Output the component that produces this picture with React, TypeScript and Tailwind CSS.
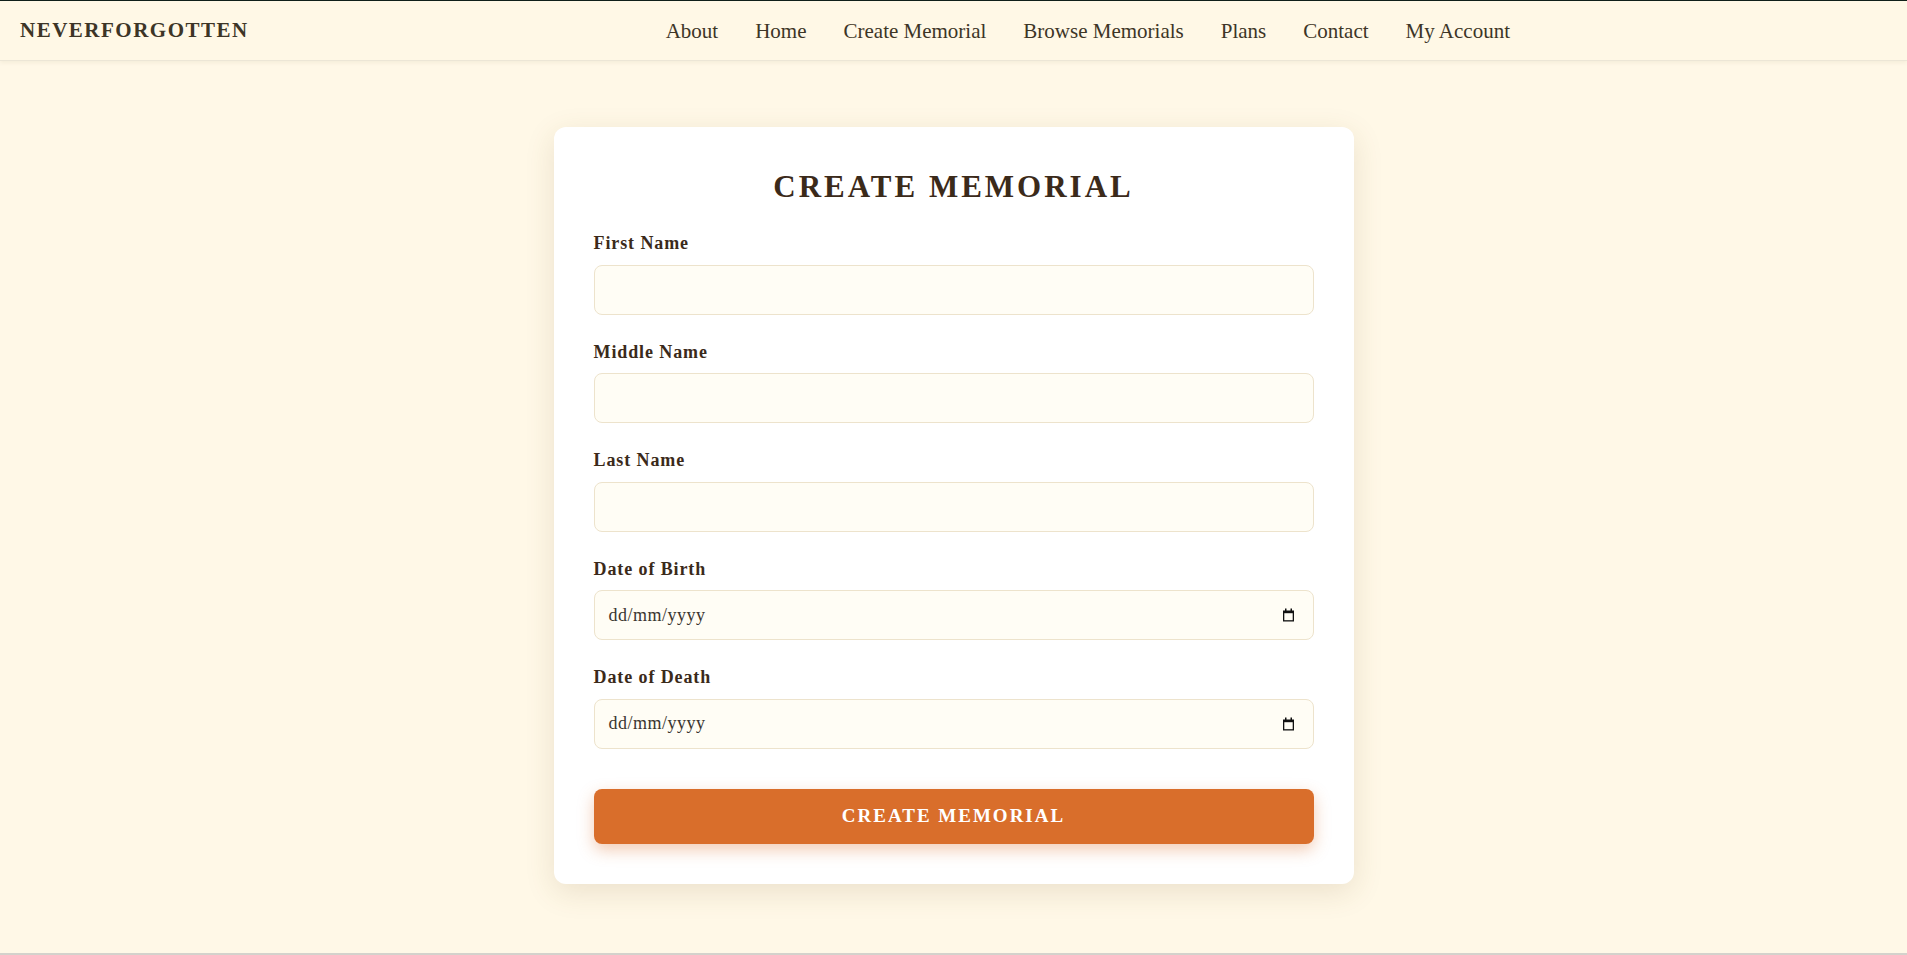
import React from 'react';

const NAV = ['About', 'Home', 'Create Memorial', 'Browse Memorials', 'Plans', 'Contact', 'My Account'];

const serif = { fontFamily: '"Liberation Serif", "DejaVu Serif", serif' };

function CalendarIcon() {
  return (
    <svg width="13" height="14" viewBox="0 0 13 14" fill="none">
      <rect x="3" y="0.5" width="1.5" height="2.5" fill="#111" />
      <rect x="8.5" y="0.5" width="1.5" height="2.5" fill="#111" />
      <path d="M1 2.5h11v11H1z" fill="#111" />
      <path d="M2.3 5.2h8.4v7H2.3z" fill="#fffdf5" />
    </svg>
  );
}

function Field({ label, date }: { label: string; date?: boolean }) {
  return (
    <div className="mb-[25px]">
      <label className="block h-6 leading-6 mb-[9.5px] text-[18px] font-bold tracking-[0.9px] text-[#3b2a1a]">
        {label}
      </label>
      {date ? (
        <div className="h-[50px] w-full rounded-lg border border-[#ede3cc] bg-[#fffdf5] px-[14px] flex items-center justify-between">
          <span className="text-[18px] tracking-[0.5px] text-[#3a3630]">dd/mm/yyyy</span>
          <span className="mr-[4px]">
            <CalendarIcon />
          </span>
        </div>
      ) : (
        <input
          type="text"
          className="block h-[50px] w-full rounded-lg border border-[#ede3cc] bg-[#fffdf5] px-[14px] text-[16px] outline-none"
        />
      )}
    </div>
  );
}

export default function App() {
  return (
    <div style={serif} className="min-h-[955px] bg-[#fff8e7] flex flex-col border-t border-[#10201a]">
      {/* header */}
      <header className="h-[60px] bg-[#fff8e6] border-b border-[#ece6d6] shadow-[0_2px_4px_rgba(80,60,20,0.06)] flex items-center pl-5 pr-5">
        <div className="text-[21px] font-bold tracking-[1.5px] text-[#3d3526]">NEVERFORGOTTEN</div>
        <nav className="flex-1 flex justify-center gap-[37px] pl-[40px] pt-[2px]">
          {NAV.map((n) => (
            <a key={n} className="text-[21px] text-[#3d3526]">
              {n}
            </a>
          ))}
        </nav>
      </header>

      {/* card */}
      <main className="flex-1 flex justify-center pt-[66px]">
        <div className="w-[800px] h-fit bg-white rounded-xl p-10 shadow-[0_8px_30px_rgba(110,85,35,0.14)]">
          <h1 className="text-center text-[31px] leading-[40px] font-bold tracking-[3px] text-[#3b2a1a] mb-[24px]">
            CREATE MEMORIAL
          </h1>
          <Field label="First Name" />
          <Field label="Middle Name" />
          <Field label="Last Name" />
          <Field label="Date of Birth" date />
          <Field label="Date of Death" date />
          <button className="mt-[15px] w-full h-[55px] rounded-lg bg-[#d96e2b] text-white text-[19px] font-bold tracking-[2px] shadow-[0_6px_16px_rgba(217,110,43,0.35)]">
            CREATE MEMORIAL
          </button>
        </div>
      </main>
      <div className="h-[2px] bg-[#d4d2cc]" />
    </div>
  );
}
